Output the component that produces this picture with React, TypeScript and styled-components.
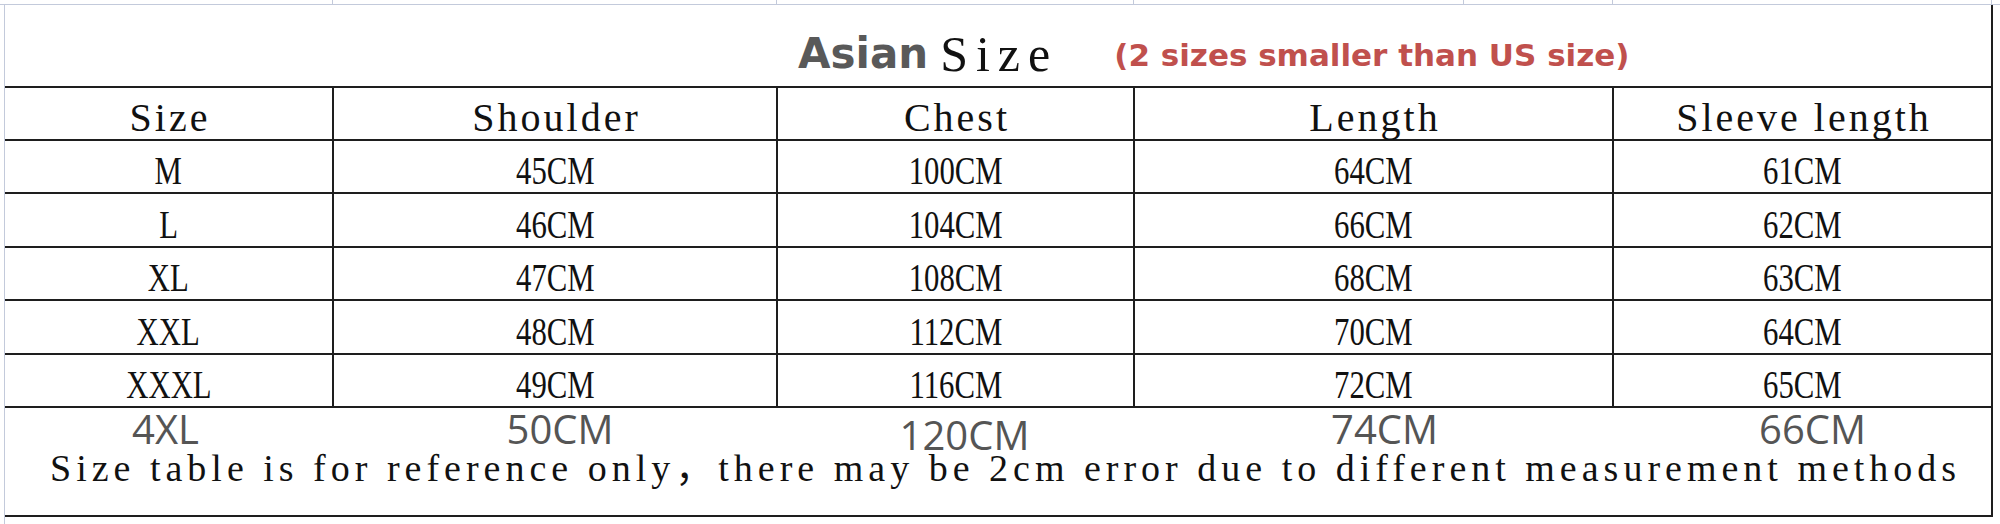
import styled, { createGlobalStyle } from 'styled-components';

const GRID = '#c3cadb';
const LINE = '#1e1e1e';
const COLS = '329px 444px 357px 479px 377px';
const SERIF = "'Liberation Serif', 'Noto Sans CJK SC', serif";

const GlobalStyle = createGlobalStyle`
  body {
    margin: 0;
    background: #fff;
  }
`;

const Page = styled.div`
  width: 2000px;
  height: 524px;
  overflow: hidden;
  background: #fff;
  display: flex;
  flex-direction: column;
`;

const TopStrip = styled.div`
  height: 4px;
  border-bottom: 1px solid ${GRID};
  display: grid;
  grid-template-columns: 333px 444px 357px 330px 149px 379px 1fr;
`;

const StripCell = styled.div`
  border-right: 1px solid ${GRID};

  &:last-child {
    border-right: none;
  }
`;

const Body = styled.div`
  display: flex;
  flex: 1;
`;

const Gutter = styled.div`
  width: 4px;
  border-right: 1px solid ${GRID};
`;

const Sheet = styled.div`
  box-sizing: border-box;
  width: 1988px;
  height: 512px;
  border-right: 2px solid ${LINE};
  border-bottom: 2px solid ${LINE};
  display: flex;
  flex-direction: column;
`;

const TitleRow = styled.div`
  box-sizing: border-box;
  height: 81px;
  display: flex;
  align-items: center;
  padding-left: 793px;
  padding-top: 16px;
`;

const TitleBold = styled.span`
  font-family: 'DejaVu Sans', sans-serif;
  font-weight: 700;
  font-size: 42px;
  color: #595959;
  margin-right: 12px;
`;

const TitleSerif = styled.span`
  font-family: ${SERIF};
  font-size: 50px;
  letter-spacing: 8px;
  color: #111;
`;

const TitleNote = styled.span`
  font-family: 'DejaVu Sans', sans-serif;
  font-weight: 700;
  font-size: 31px;
  color: #c0504d;
  margin-left: 56px;
  margin-top: 2px;
`;

const Table = styled.div`
  display: grid;
  grid-template-columns: ${COLS};
  grid-template-rows: 53px 53px 54px 53px 54px 53px;
  border-top: 2px solid ${LINE};
`;

const Cell = styled.div`
  box-sizing: border-box;
  border-right: 2px solid ${LINE};
  border-bottom: 2px solid ${LINE};
  display: flex;
  align-items: center;
  justify-content: center;
  padding-top: 7px;
  font-family: ${SERIF};
  font-size: 40px;
  color: #111;
  white-space: pre;

  &:nth-child(5n) {
    border-right: none;
  }
`;

const HeadLabel = styled.span`
  letter-spacing: 3px;
  margin-right: -3px;
`;

const Value = styled.span`
  display: inline-block;
  font-size: 41px;
  transform: scaleX(0.75);
`;

const Footer = styled.div`
  flex: 1;
  display: flex;
  flex-direction: column;
`;

const ExtraRow = styled.div`
  display: grid;
  grid-template-columns: ${COLS};
  height: 42px;
`;

const ExtraCell = styled.div<{ $drop?: number; $shift?: number }>`
  text-align: center;
  padding-left: ${(p) => Math.max(0, (p.$shift ?? 0) * 2)}px;
  padding-right: ${(p) => Math.max(0, -(p.$shift ?? 0) * 2)}px;
  margin-top: ${(p) => p.$drop ?? 0}px;
  font-family: 'Open Sans', 'Noto Sans', sans-serif;
  font-size: 40px;
  line-height: 42px;
  color: #555;
`;

const Note = styled.div`
  padding-left: 45px;
  margin-top: -2px;
  font-family: ${SERIF};
  font-size: 38px;
  letter-spacing: 5px;
  line-height: 40px;
  color: #111;
  white-space: pre;
`;

const headers = ['Size', 'Shoulder', 'Chest', 'Length', 'Sleeve length'];

const rows = [
  ['M', '45CM', '100CM', '64CM', '61CM'],
  ['L', '46CM', '104CM', '66CM', '62CM'],
  ['XL', '47CM', '108CM', '68CM', '63CM'],
  ['XXL', '48CM', '112CM', '70CM', '64CM'],
  ['XXXL', '49CM', '116CM', '72CM', '65CM'],
];

const extra = [
  { text: '4XL', drop: 0, shift: -4 },
  { text: '50CM', drop: 0, shift: 4 },
  { text: '120CM', drop: 6, shift: 8 },
  { text: '74CM', drop: 0, shift: 10 },
  { text: '66CM', drop: 0, shift: 10 },
];

const App = () => {
  return (
    <>
      <GlobalStyle />
      <Page>
        <TopStrip>
          {Array.from({ length: 7 }).map((_, i) => (
            <StripCell key={`strip-${i}`} />
          ))}
        </TopStrip>
        <Body>
          <Gutter />
          <Sheet>
            <TitleRow>
              <TitleBold>Asian</TitleBold>
              <TitleSerif>Size</TitleSerif>
              <TitleNote>(2 sizes smaller than US size)</TitleNote>
            </TitleRow>
            <Table>
              {headers.map((h) => (
                <Cell key={h}>
                  <HeadLabel>{h}</HeadLabel>
                </Cell>
              ))}
              {rows.map((row) =>
                row.map((v, i) => (
                  <Cell key={`${row[0]}-${i}`}>
                    <Value>{v}</Value>
                  </Cell>
                ))
              )}
            </Table>
            <Footer>
              <ExtraRow>
                {extra.map((e) => (
                  <ExtraCell key={e.text} $drop={e.drop} $shift={e.shift}>
                    {e.text}
                  </ExtraCell>
                ))}
              </ExtraRow>
              <Note>
                Size table is for reference only，there may be 2cm error due to different measurement methods
              </Note>
            </Footer>
          </Sheet>
        </Body>
      </Page>
    </>
  );
};

export default App;
